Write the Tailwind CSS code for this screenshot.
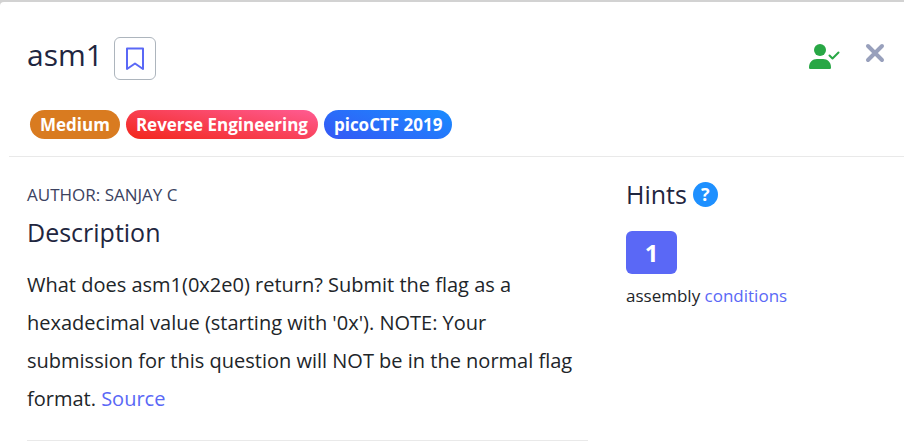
<!DOCTYPE html>
<html lang="en">
<head>
    <meta charset="UTF-8">
    <meta name="viewport" content="width=device-width, initial-scale=1.0">
    <title>asm1</title>
    <script src="https://cdn.jsdelivr.net/npm/@tailwindcss/browser@4"></script>
</head>
<body class="min-h-screen bg-[#d2d2d2] pt-[2px] font-['Open_Sans',sans-serif] text-[#212529]">
    <main class="min-h-screen rounded-tl-sm bg-white">
        <!-- Challenge header -->
        <header class="ml-[9px] border-b border-[#e9e9e9] pt-[35px] pr-[19px] pb-[17px] pl-[18px]">
            <div class="flex items-start justify-between">
                <div class="flex items-start gap-[11px]">
                    <h1 class="text-[30px] leading-9 text-[#1f2640]">asm1</h1>
                    <button type="button" aria-label="Bookmark" class="flex h-[43px] w-[42px] items-center justify-center rounded-md border border-[#adb5bd]">
                        <svg class="h-6 w-[18px]" viewBox="0 0 18 24" fill="none" stroke="#5a68f6" stroke-width="2" stroke-linejoin="round">
                            <path d="M1 1.500h16v20.500l-8-5.500-8 5.500z"/>
                        </svg>
                    </button>
                </div>
                <div class="flex items-start gap-[25px]">
                    <svg class="mt-[7px] h-[25px] w-[31px]" viewBox="0 0 31 25" role="img" aria-label="Solved">
                        <circle cx="11" cy="6" r="6" fill="#28a745"/>
                        <path d="M0 23.500C0 18 3.500 15 8 15h6c4.500 0 8 3 8 8.500 0 1-.6 1.500-1.500 1.500h-19C.6 25 0 24.500 0 23.500z" fill="#28a745"/>
                        <path d="M20.500 11.500l3 3 6-6" fill="none" stroke="#28a745" stroke-width="2" stroke-linecap="round" stroke-linejoin="round"/>
                    </svg>
                    <button type="button" aria-label="Close" class="mt-[6px]">
                        <svg class="h-5 w-5" viewBox="0 0 20 20" fill="none" stroke="#98a0bc" stroke-width="4" stroke-linecap="round">
                            <path d="M3 3l14 14M17 3L3 17"/>
                        </svg>
                    </button>
                </div>
            </div>
            <div class="mt-[30px] ml-[3px] flex flex-wrap gap-[6px] text-[17px] leading-[29px] font-bold text-white">
                <span class="rounded-full bg-[#d97b20] px-[10px]">Medium</span>
                <span class="rounded-full bg-linear-[10deg] from-[#f2261a] to-[#ff5c93] px-[10px]">Reverse Engineering</span>
                <span class="rounded-full bg-linear-[20deg] from-[#3557f5] to-[#1a8cff] px-[10px]">picoCTF 2019</span>
            </div>
        </header>

        <div class="grid grid-cols-[561fr_251fr] gap-[38px] pt-6 pr-[27px] pl-[27px]">
            <section class="border-b border-[#e9e9e9] pb-[22px]">
                <p class="text-[17px] leading-7 text-[#3c4260]">AUTHOR: SANJAY C</p>
                <h2 class="mt-[7px] text-[25px] leading-[32px] text-[#1f2640]">Description</h2>
                <p class="mt-[18px] text-[20px] leading-[38px]">What does asm1(0x2e0) return? Submit the flag as a hexadecimal value (starting with '0x'). NOTE: Your submission for this question will NOT be in the normal flag format. <a href="#" class="text-[#5a68f6]">Source</a></p>
            </section>

            <section>
                <div class="flex items-center gap-[6px]">
                    <h2 class="text-[25px] leading-[26px] text-[#1f2640]">Hints</h2>
                    <button type="button" aria-label="About hints" class="h-[25px] w-[25px] rounded-full bg-[#1e90ff] text-[18px] leading-[25px] font-bold text-white">?</button>
                </div>
                <button type="button" class="mt-6 h-[43px] w-[51px] rounded-md bg-[#5a68f6] text-[24px] font-bold text-white">1</button>
                <p class="mt-[10px] text-[17px] leading-6">assembly <a href="#" class="text-[#5a68f6]">conditions</a></p>
            </section>
        </div>
    </main>
</body>
</html>
